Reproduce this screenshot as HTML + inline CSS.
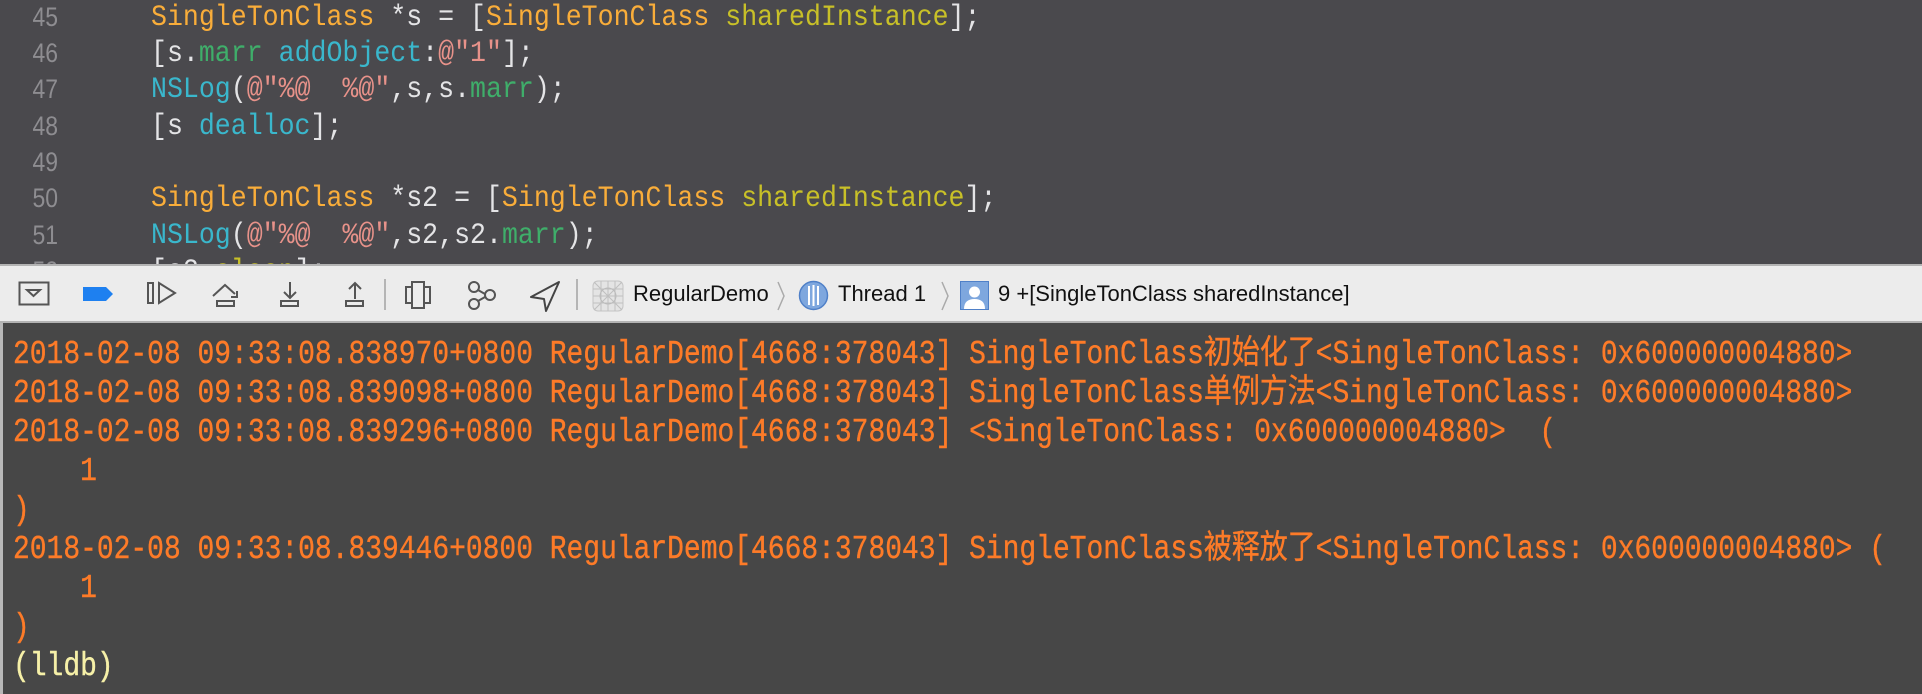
<!DOCTYPE html>
<html><head><meta charset="utf-8"><style>
*{margin:0;padding:0;box-sizing:border-box}
body{width:1922px;height:694px;overflow:hidden;background:#474747;position:relative;font-family:"Liberation Sans",sans-serif}
#code{position:absolute;left:0;top:0;width:1922px;height:266px;background:#4a494d;overflow:hidden}
.ln{position:absolute;left:0;width:58px;text-align:right;color:#8e8d91;font-family:"Liberation Sans",sans-serif;font-size:27px;transform:scaleX(.85);transform-origin:right}
.cl{position:absolute;left:151px;white-space:pre;font-family:"Liberation Mono",monospace;font-size:30px;color:#e4e4e6;transform:scaleX(.886);transform-origin:left}
.t{color:#f9ad3a}.m{color:#c8c028}.g{color:#3fae6a}.c{color:#3ab7cc}.s{color:#e8928a}
#tb{position:absolute;left:0;top:264px;width:1922px;height:59px;background:#ececec;border-top:2px solid #b3b3b3;border-bottom:2px solid #b3b3b3}
#tb svg{position:absolute}
.tt{position:absolute;top:15px;font-size:22px;color:#111;white-space:nowrap}
.sep{position:absolute;top:13px;width:2px;height:31px;background:#b5b5b5}
#con{position:absolute;left:0;top:323px;width:1922px;height:371px;background:#474747;border-left:3px solid #b8b8b8}
.o{position:absolute;left:10px;white-space:pre;font-family:"Liberation Mono","Noto Sans CJK SC",monospace;font-size:33px;color:#fd7b28;line-height:38px;transform:scaleX(.847);transform-origin:left;-webkit-text-stroke:0.4px #fd7b28}
</style></head><body>
<div id="code">
<div class="ln" style="top:2px">45</div><div class="cl" style="top:1px"><span class="t">SingleTonClass</span> *s = [<span class="t">SingleTonClass</span> <span class="m">sharedInstance</span>];</div>
<div class="ln" style="top:38px">46</div><div class="cl" style="top:37px">[s.<span class="g">marr</span> <span class="c">addObject</span>:<span class="s">@"1"</span>];</div>
<div class="ln" style="top:74px">47</div><div class="cl" style="top:73px"><span class="c">NSLog</span>(<span class="s">@"%@  %@"</span>,s,s.<span class="g">marr</span>);</div>
<div class="ln" style="top:111px">48</div><div class="cl" style="top:110px">[s <span class="c">dealloc</span>];</div>
<div class="ln" style="top:147px">49</div>
<div class="ln" style="top:183px">50</div><div class="cl" style="top:182px"><span class="t">SingleTonClass</span> *s2 = [<span class="t">SingleTonClass</span> <span class="m">sharedInstance</span>];</div>
<div class="ln" style="top:220px">51</div><div class="cl" style="top:219px"><span class="c">NSLog</span>(<span class="s">@"%@  %@"</span>,s2,s2.<span class="g">marr</span>);</div>
<div class="ln" style="top:256px">52</div><div class="cl" style="top:255px">[s2 <span class="m">sleep</span>];</div>
</div>
<div id="tb">
<svg style="left:18px;top:15px" width="32" height="26" viewBox="0 0 32 26"><rect x="1.5" y="1.5" width="29" height="22" fill="none" stroke="#555" stroke-width="2"/><path d="M9 9h13l-6.5 6z" fill="none" stroke="#555" stroke-width="2"/></svg>
<svg style="left:83px;top:21px" width="30" height="14"><path d="M0 0h23l7 7-7 7H0z" fill="#1e80f0"/></svg>
<svg style="left:146px;top:15px" width="32" height="26" viewBox="0 0 32 26"><rect x="2" y="2" width="5" height="20" fill="none" stroke="#555" stroke-width="2"/><path d="M13 2l16 10-16 10z" fill="none" stroke="#555" stroke-width="2"/></svg>
<svg style="left:211px;top:15px" width="32" height="28" viewBox="0 0 32 28"><path d="M2 15L14 4l10 9M26 10v6h-6" fill="none" stroke="#555" stroke-width="2"/><rect x="6" y="20" width="17" height="5" fill="none" stroke="#555" stroke-width="2"/></svg>
<svg style="left:279px;top:15px" width="22" height="28" viewBox="0 0 22 28"><path d="M11 1v16M5 11l6 6 6-6" fill="none" stroke="#555" stroke-width="2"/><rect x="2" y="20" width="17" height="5" fill="none" stroke="#555" stroke-width="2"/></svg>
<svg style="left:344px;top:15px" width="22" height="28" viewBox="0 0 22 28"><path d="M11 18V2M5 8l6-6 6 6" fill="none" stroke="#555" stroke-width="2"/><rect x="2" y="20" width="17" height="5" fill="none" stroke="#555" stroke-width="2"/></svg>
<div class="sep" style="left:384px"></div>
<svg style="left:404px;top:14px" width="28" height="30" viewBox="0 0 28 30"><rect x="8" y="2" width="12" height="26" fill="none" stroke="#555" stroke-width="2"/><rect x="2" y="7" width="6" height="16" fill="none" stroke="#555" stroke-width="2"/><rect x="20" y="7" width="6" height="16" fill="none" stroke="#555" stroke-width="2"/></svg>
<svg style="left:466px;top:14px" width="32" height="32" viewBox="0 0 32 32"><circle cx="8" cy="7" r="5" fill="none" stroke="#555" stroke-width="2"/><circle cx="24" cy="15" r="5" fill="none" stroke="#555" stroke-width="2"/><circle cx="8" cy="24" r="5" fill="none" stroke="#555" stroke-width="2"/><path d="M12 10l7 4M12 21l7-4" stroke="#555" stroke-width="2"/></svg>
<svg style="left:529px;top:14px" width="32" height="32" viewBox="0 0 32 32"><path d="M30 2L2 17l13 2 2 12z" fill="none" stroke="#444" stroke-width="2" stroke-linejoin="round"/></svg>
<div class="sep" style="left:576px"></div>
<svg style="left:592px;top:14px" width="32" height="32" viewBox="0 0 32 32"><rect x="1" y="1" width="30" height="30" rx="5" fill="#e4e4e4" stroke="#c4c4c4"/><path d="M1 9h30M1 16h30M1 23h30M9 1v30M16 1v30M23 1v30M2 2l28 28M30 2L2 30" stroke="#c0c0c0" stroke-width="1"/><circle cx="16" cy="16" r="8" fill="none" stroke="#bbb"/></svg>
<div class="tt" style="left:633px">RegularDemo</div>
<svg style="left:776px;top:14px" width="10" height="32"><path d="M2 2l6 14-6 14" fill="none" stroke="#aaa" stroke-width="1.5"/></svg>
<svg style="left:798px;top:14px" width="31" height="31" viewBox="0 0 31 31"><circle cx="15.5" cy="15.5" r="14" fill="#7ea7de" stroke="#4f80c8" stroke-width="1.5"/><path d="M11 6v19M15.5 5v21M20 6v19" stroke="#fff" stroke-width="2"/></svg>
<div class="tt" style="left:838px">Thread 1</div>
<svg style="left:940px;top:14px" width="10" height="32"><path d="M2 2l6 14-6 14" fill="none" stroke="#aaa" stroke-width="1.5"/></svg>
<svg style="left:960px;top:15px" width="29" height="29" viewBox="0 0 29 29"><rect x="0.5" y="0.5" width="28" height="28" fill="#7ea7de" stroke="#4f80c8"/><circle cx="14.5" cy="11" r="5.5" fill="#fff"/><path d="M4 28c0-7 4-10 10.5-10S25 21 25 28z" fill="#fff"/></svg>
<div class="tt" style="left:998px">9 +[SingleTonClass sharedInstance]</div>
</div>
<div id="con">
<div class="o" style="top:13px">2018-02-08 09:33:08.838970+0800 RegularDemo[4668:378043] SingleTonClass初始化了&lt;SingleTonClass: 0x600000004880&gt;</div>
<div class="o" style="top:52px">2018-02-08 09:33:08.839098+0800 RegularDemo[4668:378043] SingleTonClass单例方法&lt;SingleTonClass: 0x600000004880&gt;</div>
<div class="o" style="top:91px">2018-02-08 09:33:08.839296+0800 RegularDemo[4668:378043] &lt;SingleTonClass: 0x600000004880&gt;  (</div>
<div class="o" style="top:130px">    1</div>
<div class="o" style="top:169px">)</div>
<div class="o" style="top:208px">2018-02-08 09:33:08.839446+0800 RegularDemo[4668:378043] SingleTonClass被释放了&lt;SingleTonClass: 0x600000004880&gt; (</div>
<div class="o" style="top:247px">    1</div>
<div class="o" style="top:286px">)</div>
<div class="o" style="top:325px;color:#f6f0a8;-webkit-text-stroke:0.4px #f6f0a8">(lldb)</div>
</div>
</body></html>
